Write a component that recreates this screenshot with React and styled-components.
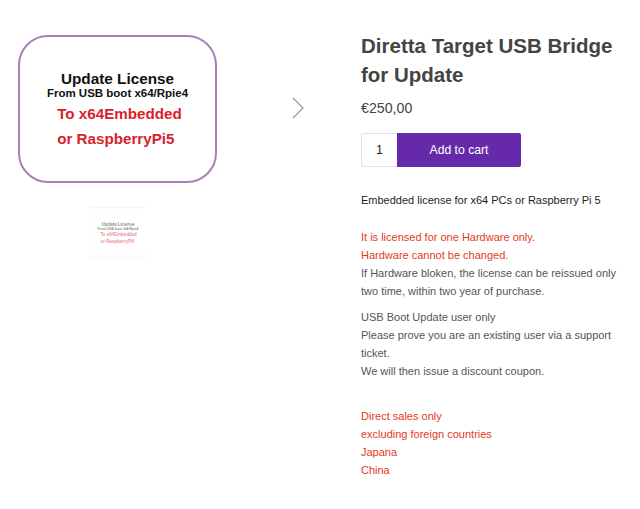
import React, { useState } from 'react';
import styled, { createGlobalStyle } from 'styled-components';

const GlobalStyle = createGlobalStyle`
  html, body {
    margin: 0;
    padding: 0;
    background: #ffffff;
  }
  body {
    font-family: "Liberation Sans", Arial, sans-serif;
    color: #555555;
  }
`;

const Page = styled.div`
  display: flex;
  width: 640px;
`;

const GalleryColumn = styled.div`
  width: 361px;
  flex-shrink: 0;
  padding: 35px 0 0 18px;
  box-sizing: border-box;
  display: flex;
  flex-direction: column;
`;

const Stage = styled.div`
  display: flex;
  align-items: center;
`;

const Card = styled.div`
  width: 199px;
  height: 148px;
  box-sizing: border-box;
  border: 2px solid #a880b6;
  border-radius: 30px;
  background: #ffffff;
  padding-top: 34px;
  display: flex;
  flex-direction: column;
  align-items: center;
  font-family: "Liberation Sans", Arial, sans-serif;
  font-weight: 700;
  color: #111111;
`;

const CardTitle = styled.div`
  font-size: 15.3px;
  line-height: 16px;
`;

const CardSub = styled.div`
  font-size: 11.5px;
  line-height: 13px;
`;

const CardRed = styled.div`
  margin-top: 1px;
  padding-left: 4px;
  color: #d9212b;
  font-size: 15.2px;
  line-height: 25px;
  text-align: left;
`;

const NextArrow = styled.button`
  margin-left: 72px;
  margin-top: -3px;
  width: 18px;
  height: 26px;
  padding: 0;
  border: none;
  background: transparent;
  cursor: pointer;
  display: flex;
  align-items: center;
  justify-content: center;
`;

const ThumbRow = styled.div`
  width: 199px;
  display: flex;
  justify-content: center;
  margin-top: 24px;
`;

const Thumb = styled.div`
  width: 57px;
  height: 51px;
  overflow: hidden;
  position: relative;
  border-top: 1px solid #f0f0f0;
  border-bottom: 1px solid #f0f0f0;
  box-sizing: border-box;
  opacity: ${p => (p.$active ? 0.5 : 1)};
`;

const ThumbInner = styled.div`
  position: absolute;
  left: 50%;
  top: 50%;
  transform: translate(-50%, -50%) scale(0.29);

  & > div {
    border-color: #f4f0f6;
  }
`;

const InfoColumn = styled.div`
  width: 270px;
  padding-top: 31px;
  display: flex;
  flex-direction: column;
`;

const Title = styled.h1`
  margin: 0;
  font-size: 20.5px;
  line-height: 29px;
  font-weight: 700;
  color: #444444;
`;

const Price = styled.div`
  margin-top: 8px;
  font-size: 14.2px;
  line-height: 22px;
  color: #444444;
`;

const CartForm = styled.form`
  display: flex;
  margin-top: 14px;
  height: 34px;
`;

const QtyInput = styled.input`
  width: 36px;
  height: 34px;
  box-sizing: border-box;
  border: 1px solid #e2e2e2;
  border-right: none;
  border-radius: 2px 0 0 2px;
  text-align: center;
  font-family: inherit;
  font-size: 12.5px;
  color: #222222;
  padding: 0;
  outline: none;
`;

const CartButton = styled.button`
  width: 124px;
  height: 34px;
  border: none;
  border-radius: 0 2px 2px 0;
  background: #6629a9;
  color: #ffffff;
  font-family: inherit;
  font-size: 12.2px;
  cursor: pointer;
`;

const Lead = styled.p`
  margin: 24px 0 19px;
  font-size: 11px;
  line-height: 18px;
  color: #1e1e1e;
`;

const Para = styled.p`
  margin: 0 0 ${p => p.$gap || 8}px;
  font-size: 11px;
  line-height: 18px;
  color: #555555;
`;

const Warn = styled.span`
  color: #e23a1e;
`;

const CardArt = () => (
  <Card>
    <CardTitle>Update License</CardTitle>
    <CardSub>From USB boot x64/Rpie4</CardSub>
    <CardRed>
      To x64Embedded
      <br />
      or RaspberryPi5
    </CardRed>
  </Card>
);

const App = () => {
  const [qty, setQty] = useState(1);

  return (
    <>
      <GlobalStyle />
      <Page>
        <GalleryColumn>
          <Stage>
            <CardArt />
            <NextArrow aria-label="Next image">
              <svg width="14" height="24" viewBox="0 0 14 24" fill="none">
                <path d="M2 2 L12 12 L2 22" stroke="#9a9a9a" strokeWidth="1.2" />
              </svg>
            </NextArrow>
          </Stage>
          <ThumbRow>
            <Thumb $active>
              <ThumbInner>
                <CardArt />
              </ThumbInner>
            </Thumb>
          </ThumbRow>
        </GalleryColumn>

        <InfoColumn>
          <Title>Diretta Target USB Bridge for Update</Title>
          <Price>€250,00</Price>
          <CartForm onSubmit={e => e.preventDefault()}>
            <QtyInput
              type="text"
              value={qty}
              onChange={e => setQty(e.target.value)}
            />
            <CartButton type="submit">Add to cart</CartButton>
          </CartForm>

          <Lead>Embedded license for x64 PCs or Raspberry Pi 5</Lead>

          <Para>
            <Warn>It is licensed for one Hardware only.</Warn>
            <br />
            <Warn>Hardware cannot be changed.</Warn>
            <br />
            If Hardware bloken, the license can be reissued only two time, within two year of purchase.
          </Para>

          <Para $gap={9}>
            USB Boot Update user only
            <br />
            Please prove you are an existing user via a support ticket.
            <br />
            We will then issue a discount coupon.
            <br />
            <br />
          </Para>

          <Para>
            <Warn>Direct sales only</Warn>
            <br />
            <Warn>excluding foreign countries</Warn>
            <br />
            <Warn>Japana</Warn>
            <br />
            <Warn>China</Warn>
          </Para>
        </InfoColumn>
      </Page>
    </>
  );
};

export default App;
